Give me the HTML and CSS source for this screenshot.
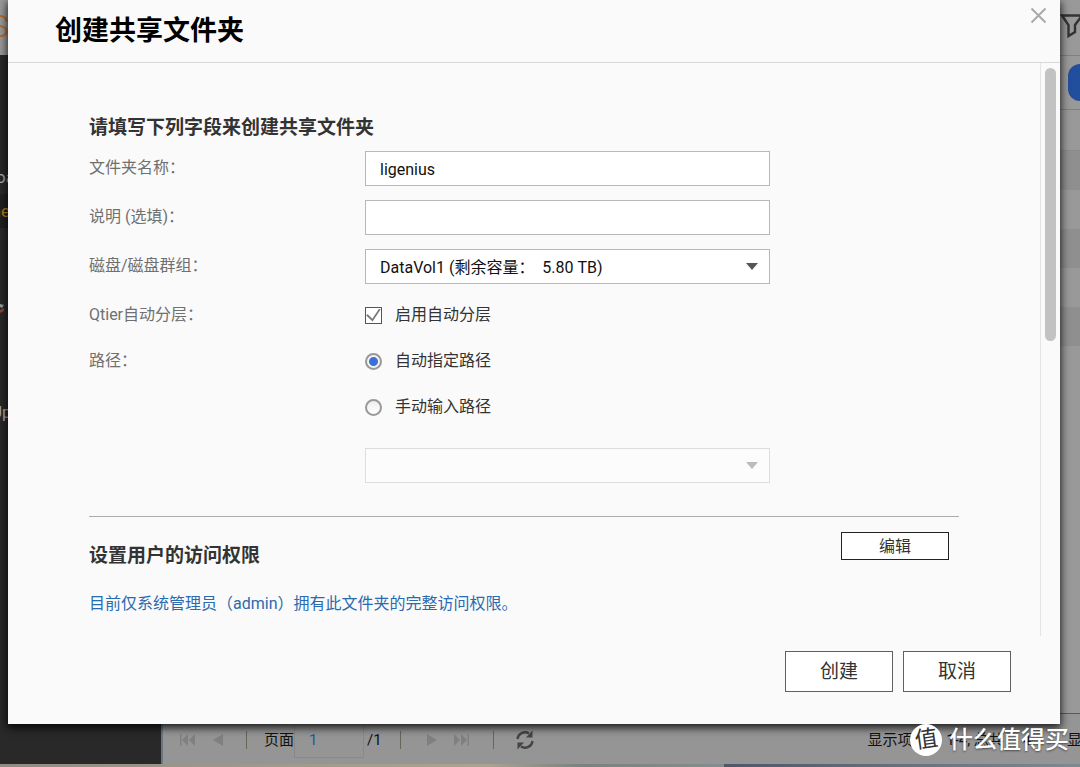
FILE: index.html
```html
<!DOCTYPE html>
<html lang="zh-CN">
<head>
<meta charset="utf-8">
<title>创建共享文件夹</title>
<link rel="stylesheet" href="styles.css">
</head>
<body>
<div class="app">
  <header class="topbar">
    <span class="brand">S</span>
    <svg class="filter" width="23" height="26" viewBox="0 0 23 26" fill="none" stroke="#333" stroke-width="2.4"><path d="M2 2.500H22L15 12V19L8.500 23V12Z"/></svg>
  </header>
  <div class="workspace">
    <nav class="sidebar">
      <span class="nav-item">oa</span>
      <span class="nav-item active">me</span>
      <span class="nav-item nav-icon"><svg width="8" height="14" viewBox="0 0 8 14"><path d="M0 3L4 4L2 7L0 6Z" fill="#999"/><path d="M0 9L4 7V10L0 12Z" fill="#8a4540"/></svg></span>
      <span class="nav-item update">Up</span>
    </nav>
    <main class="main">
      <div class="actions"><button class="primary" type="button" aria-label="创建"></button></div>
      <div class="rows">
        <div class="row head"></div><div class="row"></div><div class="row"></div><div class="row"></div><div class="row"></div><div class="row"></div>
      </div>
      <div class="pager">
        <button class="page-btn first" type="button" aria-label="首页"><svg width="18" height="14" viewBox="0 0 18 14" fill="#808080"><path d="M2 1H3.500V13H2ZM10 1V13L4 7ZM17 1V13L11 7Z"/></svg></button>
        <button class="page-btn prev" type="button" aria-label="上一页"><svg width="12" height="14" viewBox="0 0 12 14" fill="#808080"><path d="M11 1V13L1 7Z"/></svg></button>
        <i class="sep"></i>
        <label class="page-label" for="page">页面</label>
        <input class="page-input" id="page" type="text" value="1">
        <span class="page-total">/1</span>
        <i class="sep"></i>
        <button class="page-btn next" type="button" aria-label="下一页"><svg width="12" height="14" viewBox="0 0 12 14" fill="#808080"><path d="M1 1V13L11 7Z"/></svg></button>
        <button class="page-btn last" type="button" aria-label="末页"><svg width="18" height="14" viewBox="0 0 18 14" fill="#808080"><path d="M1 1V13L7 7ZM8 1V13L14 7ZM14.500 1H16V13H14.500Z"/></svg></button>
        <i class="sep"></i>
        <button class="page-btn refresh" type="button" aria-label="刷新"><svg width="20" height="22" viewBox="0 0 20 22" fill="none" stroke="#444" stroke-width="2.400"><path d="M2.500 10A7.500 7.500 0 0 1 14 4.500M17.500 12A7.500 7.500 0 0 1 6 17.500"/><path d="M17.500 1.500V8.500H11ZM2.500 20.500V13.500H9Z" fill="#444" stroke="none"/></svg></button>
        <span class="summary">显示项目： 1-4, 总共： 4</span>
        <span class="show">显示</span>
      </div>
    </main>
  </div>
  <div class="desktop-edge"></div>
</div>

<form class="dialog" role="dialog" aria-labelledby="title">
  <header class="dialog-head">
    <h1 class="title" id="title">创建共享文件夹</h1>
    <button class="close" type="button" aria-label="关闭"><svg width="17" height="17" viewBox="0 0 17 17" stroke="#a8a8a8" stroke-width="1.800"><path d="M1.500 1.500L15.500 15.500M15.500 1.500L1.500 15.500"/></svg></button>
  </header>
  <div class="dialog-body">
    <div class="content">
      <h2 class="heading">请填写下列字段来创建共享文件夹</h2>
      <div class="fields">
        <label class="label" for="name">文件夹名称：</label>
        <input class="box" id="name" type="text" value="ligenius">
        <label class="label" for="desc">说明 (选填)：</label>
        <input class="box" id="desc" type="text">
        <label class="label" for="vol">磁盘/磁盘群组：</label>
        <div class="select"><select class="box" id="vol"><option>DataVol1 (剩余容量：&nbsp; 5.80 TB)</option></select></div>
        <span class="label">Qtier自动分层：</span>
        <label class="option"><input class="check" type="checkbox" checked>启用自动分层</label>
        <span class="label">路径：</span>
        <label class="option"><input class="radio" type="radio" name="path" checked>自动指定路径</label>
        <label class="option second"><input class="radio" type="radio" name="path">手动输入路径</label>
        <div class="select off"><select class="box" aria-label="路径" disabled><option></option></select></div>
      </div>
      <section class="access">
        <div class="access-head">
          <h2 class="heading">设置用户的访问权限</h2>
          <button class="btn small" type="button">编辑</button>
        </div>
        <p class="note">目前仅系统管理员（admin）拥有此文件夹的完整访问权限。</p>
      </section>
    </div>
    <div class="scrollbar"><div class="thumb"></div></div>
  </div>
  <footer class="dialog-foot">
    <button class="btn" type="button">创建</button>
    <button class="btn" type="button">取消</button>
  </footer>
</form>

<div class="watermark"><span class="badge"><span class="badge-char">值</span></span>什么值得买</div>
</body>
</html>
```

FILE: styles.css
```css
* { box-sizing: border-box; }
body {
  margin: 0;
  font: 16px/24px Roboto, "Noto Sans CJK SC", sans-serif;
  color: #333;
  overflow: hidden;
}
h1, h2, p { margin: 0; }
button, input, select { font: inherit; color: inherit; }
svg { display: block; }

.app { display: flex; flex-direction: column; height: 100vh; background: #999; }
.topbar { display: flex; justify-content: space-between; height: 55px; overflow: hidden; }
.brand { margin-left: -10px; font-size: 32px; font-weight: 300; line-height: 52px; color: #b86a24; }
.filter { margin: 13px -3px 0 0; }
.workspace { display: flex; flex: 1; min-height: 0; }
.sidebar {
  display: flex; flex-direction: column;
  width: 161px; padding-top: 105px;
  background: #292929; color: #aaa; overflow: hidden;
}
.nav-item { height: 34px; font-size: 17px; line-height: 34px; text-indent: -4px; }
.nav-item.active { background: #202020; color: #b5801f; text-indent: -14px; }
.nav-icon { display: flex; align-items: center; margin: 63px 0 70px; }
.nav-item.update { text-indent: -9px; }
.main { display: flex; flex-direction: column; flex: 1; min-width: 0; border-left: 2px solid #687684; }
.actions {
  display: flex; justify-content: flex-end; align-items: center;
  height: 55px; border-top: 1px solid #808080; border-bottom: 1px solid #808080;
}
.primary { width: 40px; height: 37px; margin-right: -28px; border: 0; border-radius: 12px; background: #214f9e; }
.rows { flex: 1; min-height: 0; }
.row { height: 39px; }
.row.head { height: 41px; border-bottom: 1px solid #8b8b8b; }
.row:nth-child(even) { background: #8f8f8f; }
.pager {
  display: flex; align-items: center;
  height: 51px; padding: 2px 0 0 15px;
  border-top: 1px solid #5a5a5a;
  background: #959595; color: #111;
  font-size: 15px; white-space: nowrap; overflow: hidden;
}
.page-btn { flex: none; padding: 0; border: 0; background: none; }
.prev { margin-left: 16px; }
.sep { flex: none; width: 1px; height: 18px; margin: 0 17px 0 22px; background: #66665d; }
.page-input { width: 70px; height: 36px; padding: 0 14px; border: 1px solid #898989; background: none; color: #24559f; }
.page-total { margin: 0 -4px 0 3px; }
.next { margin-left: 8px; }
.last { margin: 0 0 0 15px; }
.refresh { margin-left: 4px; }
.summary { margin-left: auto; }
.show { width: 13px; margin-left: 36px; }
.desktop-edge {
  height: 3px;
  background: linear-gradient(90deg, #8f8d82, #aaa391 45%, #79827f 54%, #858e8e 67%, #4d5869 67%, #7d8a90);
}

.dialog {
  position: absolute; inset: 0 20px 43px 8px;
  display: flex; flex-direction: column;
  background: #fafafa;
  box-shadow: 0 3px 8px 1px rgba(0, 0, 0, .8);
}
.dialog-head {
  display: flex; justify-content: space-between; align-items: flex-start;
  height: 63px; padding: 7px 13px 0 47px;
  border-bottom: 1px solid #d9d9d9;
}
.title { font-size: 27px; line-height: 48px; color: #000; }
.close { padding: 0; border: 0; background: none; }
.dialog-body { display: flex; flex: 1; min-height: 0; }
.content { flex: 1; min-width: 0; padding: 53px 81px 0; overflow: hidden; }
.scrollbar { width: 20px; padding: 5px 4px; border-left: 1px solid #e4e4e4; }
.thumb { width: 11px; height: 273px; border-radius: 6px; background: #c2c2c2; }
.heading { font-size: 19px; line-height: 24px; color: #333; }

.fields {
  display: grid; grid-template-columns: 276px minmax(0, 405px);
  row-gap: 14px; margin-top: 11px;
}
.label { height: 32px; line-height: 34px; color: #707070; }
.box {
  display: block; width: 100%; height: 35px; margin: 0; padding: 2px 14px 0;
  border: 1px solid #b8b8b8; border-radius: 0;
  background: #fff; color: #111; appearance: none;
}
.select { position: relative; }
.select::after {
  content: ""; position: absolute; top: 14px; right: 12px;
  border: 6px solid transparent; border-top: 7px solid #555; border-bottom: 0;
  pointer-events: none;
}
.off { grid-column: 2; margin-top: 12px; }
.off .box { border-color: #ddd; background: #fcfcfc; opacity: 1; }
.off::after { border-top-color: #bbb; }
.option { display: flex; align-items: center; gap: 13px; height: 32px; padding-top: 2px; }
.second { grid-column: 2; }
.check, .radio { appearance: none; width: 17px; height: 17px; margin: 0; border: 1px solid #555; }
.check {
  display: grid; place-items: center;
  background: #fff;
}
.check:checked::before {
  content: ""; width: 15px; height: 13px; background: #777;
  clip-path: polygon(0 52%, 12% 44%, 42% 78%, 88% 0, 98% 6%, 44% 100%);
}
.radio { border: 2px solid #999; border-radius: 50%; background: linear-gradient(#eee, #fff); }
.radio:checked { background: radial-gradient(circle, #3d70d6 0 4px, #f4f4f4 5px); }

.access { margin-top: 33px; border-top: 1px solid #aaa; }
.access-head { display: flex; justify-content: space-between; align-items: flex-start; padding: 15px 10px 0 0; }
.access-head .heading { padding-top: 12px; }
.note { margin-top: 24px; color: #2a6ab0; }
.btn {
  width: 108px; height: 41px; padding: 0;
  border: 1px solid #606060; background: #fff;
  font-size: 19px; line-height: 24px; color: #333;
}
.small { height: 28px; padding-top: 2px; border-color: #222; font-size: 16px; line-height: 20px; }
.dialog-foot { display: flex; justify-content: flex-end; gap: 10px; padding: 15px 49px 32px; }

.watermark {
  position: absolute; right: 11px; bottom: 10px;
  display: flex; align-items: center; gap: 7px;
  font-size: 24px; line-height: 34px; font-weight: 500; color: #fff;
  text-shadow: 0 1px 2px rgba(0, 0, 0, .5);
}
.badge {
  display: grid; place-items: center;
  width: 32px; height: 32px; border-radius: 50%; background: #fff;
  text-shadow: none;
}
.badge-char { font-size: 23px; line-height: 32px; font-weight: 400; color: #333; transform: rotate(-8deg); }
```
